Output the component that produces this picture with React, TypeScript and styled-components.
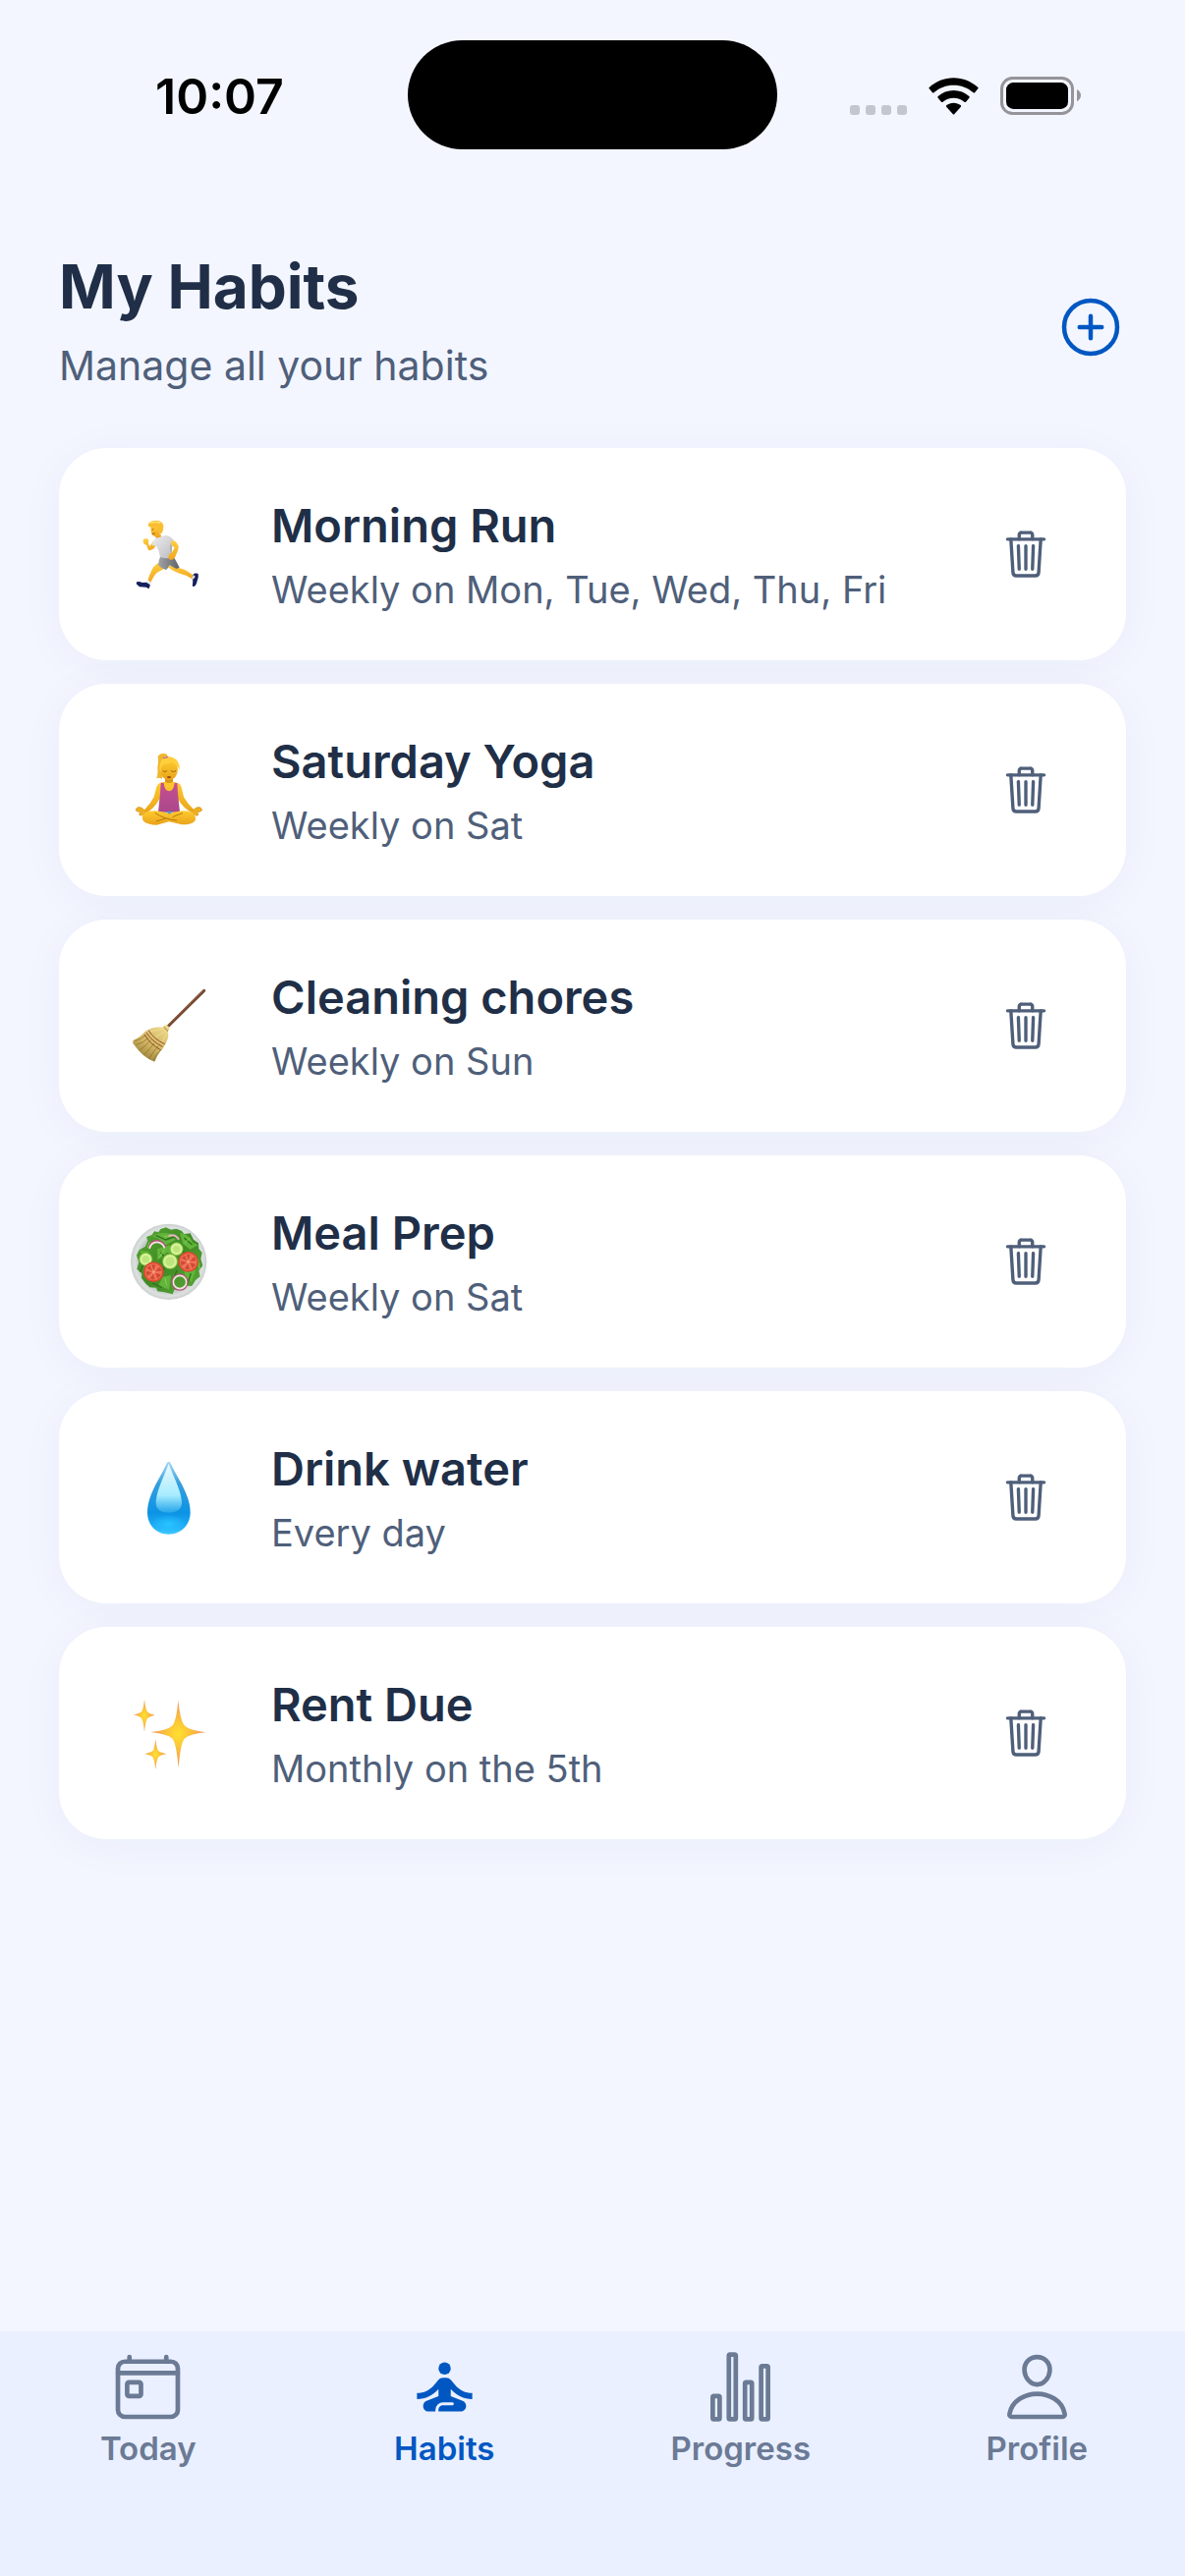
import React from "react";
import styled, { createGlobalStyle } from "styled-components";

const color = {
  page: "#f3f6ff",
  card: "#ffffff",
  bar: "#eaf0ff",
  ink: "#202f47",
  muted: "#4f5f7a",
  idle: "#6b7a95",
  accent: "#0057c2",
};

const GlobalStyle = createGlobalStyle`
  *, *::before, *::after { box-sizing: border-box; }
  body {
    margin: 0;
    background: ${color.page};
    color: ${color.ink};
    font-family: Inter, "Liberation Sans", sans-serif;
  }
  h1, h2, p, ul { margin: 0; padding: 0; }
  button { font: inherit; border: 0; padding: 0; background: none; cursor: pointer; }
`;

const Screen = styled.div`
  display: flex;
  flex-direction: column;
  min-height: 100vh;
`;

const StatusBar = styled.div`
  display: grid;
  grid-template-columns: 1fr 376px 1fr;
  align-items: center;
  justify-items: center;
  padding: 41px 32px 28px;
`;

const Clock = styled.time`
  padding-top: 2px;
  font-size: 50px;
  line-height: 60px;
  font-weight: 600;
  color: #000;
`;

const Island = styled.div`
  width: 100%;
  height: 111px;
  border-radius: 56px;
  background: #000;
`;

const StatusIcons = styled.div`
  display: flex;
  align-items: center;
  gap: 22px;
  padding-top: 2px;
  svg { display: block; }
`;

const Header = styled.header`
  display: flex;
  align-items: center;
  justify-content: space-between;
  padding: 72px 60px 42px;
`;

const Heading = styled.div`
  display: flex;
  flex-direction: column;
  gap: 12px;
  padding-bottom: 14px;
`;

const Title = styled.h1`
  font-size: 62px;
  line-height: 80px;
  font-weight: 700;
`;

const Subtitle = styled.p`
  font-size: 41px;
  line-height: 56px;
  color: ${color.muted};
`;

const AddButton = styled.button`
  display: flex;
  color: ${color.accent};
`;

const Main = styled.main`
  flex: 1;
  padding: 0 60px 60px;
`;

const HabitList = styled.ul`
  display: flex;
  flex-direction: column;
  gap: 24px;
  list-style: none;
`;

const HabitCard = styled.li`
  display: flex;
  align-items: center;
  padding: 48px;
  border-radius: 48px;
  background: ${color.card};
  box-shadow: 0 6px 48px rgba(32, 47, 90, 0.04);
`;

const Emoji = styled.div`
  display: flex;
  justify-content: center;
  width: 126px;
  margin-right: 42px;
`;

const HabitText = styled.div`
  display: flex;
  flex: 1;
  flex-direction: column;
  gap: 10px;
  min-width: 0;
`;

const HabitName = styled.h2`
  font-size: 47px;
  line-height: 62px;
  font-weight: 600;
`;

const HabitSchedule = styled.p`
  font-size: 38px;
  line-height: 48px;
  color: ${color.muted};
`;

const DeleteButton = styled.button`
  display: flex;
  align-items: center;
  justify-content: center;
  width: 108px;
  height: 108px;
  color: ${color.muted};
`;

const TabBar = styled.nav`
  display: flex;
  padding: 19px 0 110px;
  background: ${color.bar};
`;

const Tab = styled.a<{ $active?: boolean }>`
  display: flex;
  flex: 1;
  flex-direction: column;
  align-items: center;
  gap: 5px;
  color: ${(p) => (p.$active ? color.accent : color.idle)};
  font-size: 33px;
  line-height: 40px;
  font-weight: 600;
  text-decoration: none;
`;

const LineIcon = ({ size, children }: { size: number; children: React.ReactNode }) => (
  <svg
    width={size}
    height={size}
    viewBox="0 0 512 512"
    fill="none"
    stroke="currentColor"
    strokeWidth="32"
    strokeLinecap="round"
    strokeLinejoin="round"
    aria-hidden="true"
  >
    {children}
  </svg>
);

const AddIcon = () => (
  <LineIcon size={72}>
    <circle cx="256" cy="256" r="192" />
    <path d="M256 176v160M336 256H176" />
  </LineIcon>
);

const TrashIcon = () => (
  <LineIcon size={54}>
    <path d="M112 112l20 320c.95 18.49 14.4 32 32 32h184c17.67 0 30.87-13.51 32-32l20-320" />
    <path d="M80 112h352" />
    <path d="M192 112V72a23.93 23.93 0 0124-24h80a23.93 23.93 0 0124 24v40" />
    <path d="M256 176v224M184 176l8 224M328 176l-8 224" />
  </LineIcon>
);

const TodayIcon = () => (
  <LineIcon size={75}>
    <rect x="48" y="80" width="416" height="384" rx="48" />
    <rect x="112" y="224" width="96" height="96" rx="13" />
    <path d="M128 48v32M384 48v32M464 160H48" />
  </LineIcon>
);

const HabitsIcon = () => (
  <svg width="75" height="75" viewBox="0 0 24 24" fill="currentColor" aria-hidden="true">
    <circle cx="12" cy="6" r="2" />
    <path d="M21 16v-2c-2.24 0-4.16-.96-5.6-2.68l-1.34-1.6A1.98 1.98 0 0012.53 9h-1.05c-.59 0-1.15.26-1.53.72l-1.34 1.6C7.16 13.04 5.24 14 3 14v2c2.77 0 5.19-1.17 7-3.25V15l-3.88 1.55c-.67.27-1.12.93-1.12 1.66C5 19.2 5.8 20 6.79 20H9v-.5a2.5 2.5 0 012.5-2.5h3c.28 0 .5.22.5.5s-.22.5-.5.5h-3c-.83 0-1.5.67-1.5 1.5v.5h7.1c.99 0 1.9-.8 1.9-1.79 0-.73-.45-1.39-1.12-1.66L14 15v-2.25c1.81 2.08 4.23 3.25 7 3.25z" />
  </svg>
);

const ProgressIcon = () => (
  <LineIcon size={75}>
    <rect x="64" y="320" width="48" height="160" rx="8" />
    <rect x="288" y="224" width="48" height="256" rx="8" />
    <rect x="400" y="112" width="48" height="368" rx="8" />
    <rect x="176" y="32" width="48" height="448" rx="8" />
  </LineIcon>
);

const ProfileIcon = () => (
  <LineIcon size={75}>
    <path d="M344 144c-3.92 52.87-44 96-88 96s-84.15-43.12-88-96c-4-55 35-96 88-96s92 42 88 96z" />
    <path d="M256 304c-87 0-175.3 48-191.64 138.6C62.39 453.52 68.57 464 80 464h352c11.44 0 17.62-10.48 15.65-21.4C431.3 352 343 304 256 304z" />
  </LineIcon>
);

const SignalIcon = () => (
  <svg width="58" height="38" viewBox="0 0 58 38" fill="#c3c6cf" aria-hidden="true">
    {[0, 16, 32, 48].map((x) => (
      <rect key={x} x={x} y="28" width="10" height="10" rx="3" />
    ))}
  </svg>
);

const WifiIcon = () => (
  <svg width="51" height="38" viewBox="0 0 153 114" aria-hidden="true">
    <path d="M76.500 1C105 1 131 12 151 30Q153 32 151 34L141 46Q139 48 137 46C120 31 99 23 76.500 23S33 31 16 46Q14 48 12 46L2 34Q0 32 2 30C22 12 48 1 76.500 1Z" />
    <path d="M76.500 39C95 39 111 46 124 57Q127 60 124 62L114 74Q112 76 109 74C100 66 89 62 76.500 62S53 66 44 74Q41 76 39 74L29 62Q26 60 29 57C42 46 58 39 76.500 39Z" />
    <path d="M76.500 77C85 77 92 80 98 84Q101 87 98 90L79 111Q76.500 114 74 111L55 90Q52 87 55 84C61 80 68 77 76.500 77Z" />
  </svg>
);

const BatteryIcon = () => (
  <svg width="82" height="39" viewBox="0 0 246 117" aria-hidden="true">
    <rect x="4.500" y="4.500" width="216" height="108" rx="33" fill="none" stroke="#949499" strokeWidth="9" />
    <rect x="18" y="18" width="189" height="81" rx="22" />
    <path d="M234 39C242 44 246 50 246 57S242 71 234 76Z" fill="#949499" />
  </svg>
);

const RunnerArt = () => (
  <svg width="84" height="84" viewBox="87 66 252 252" role="img" aria-label="Runner">
    <defs>
      <linearGradient id="run-skin" x1="0" y1="0" x2="0" y2="1">
        <stop offset="0" stopColor="#ffcf3f" />
        <stop offset="1" stopColor="#f0a51e" />
      </linearGradient>
      <linearGradient id="run-shirt" x1="0" y1="0" x2="1" y2="1">
        <stop offset="0" stopColor="#ededf0" />
        <stop offset="1" stopColor="#bcbcc0" />
      </linearGradient>
      <linearGradient id="run-shorts" x1="0" y1="0" x2="1" y2="0">
        <stop offset="0" stopColor="#a2a4a7" />
        <stop offset="1" stopColor="#5f6266" />
      </linearGradient>
    </defs>
    <path d="M226 223L252 236Q268 238 292 259L287 268Q268 254 249 251Q229 246 213 232Z" fill="url(#run-skin)" />
    <path d="M290 254Q293 249 304 251Q308 257 302 274Q300 288 292 291Q286 291 288 284Q291 273 287 268Z" fill="#17205c" />
    <path d="M286 263L292 256L296 261L289 270Z" fill="#e9eaf4" />
    <path d="M188 216Q167 227 160 249Q154 260 151 275L159 281Q168 259 180 248Q196 242 206 232Z" fill="url(#run-skin)" />
    <path d="M118 277Q126 275 134 279L149 278L158 284Q159 292 154 298L146 293L126 292Q116 287 116 280Z" fill="#17205c" />
    <path d="M148 275L153 272L162 278L158 284Q152 283 148 279Z" fill="#e9eaf4" />
    <path d="M190 199L232 203Q240 217 248 233L238 237L218 226Q210 240 206 240Q193 237 183 226Q184 210 190 199Z" fill="url(#run-shorts)" />
    <path d="M174 139L189 132L199 145L184 155Z" fill="#eaa11e" />
    <path d="M167 153L178 163Q170 179 157 181Q151 180 148 165L140 161L136 151Q139 143 149 145Q156 147 153 160L157 168Q163 162 167 153Z" fill="url(#run-skin)" />
    <path d="M166 156Q169 145 185 141L203 135Q220 134 230 149L233 160L225 170Q225 191 222 204Q205 207 189 201Q187 184 178 168L165 165Z" fill="url(#run-shirt)" />
    <path d="M220 158Q217 175 222 194Q226 181 225 169Z" fill="#aaaeb3" />
    <path d="M226 151Q236 150 245 167Q246 178 237 195Q234 208 221 210Q212 207 215 195Q218 188 224 189L233 172L224 166Q220 157 226 151Z" fill="url(#run-skin)" />
    <path d="M160 103Q159 120 163 131Q171 142 184 136Q194 126 193 111Q183 98 160 103Z" fill="url(#run-skin)" />
    <path d="M153 102Q154 91 174 89Q195 89 199 104Q200 120 192 130Q187 132 184 126Q187 121 182 119L181 108Q168 112 153 108Z" fill="#f9bd32" />
    <path d="M164 117L169 116M165 130L173 129" stroke="#9a5a12" strokeWidth="3" fill="none" />
    <path d="M158 97Q174 91 190 97" stroke="#ffdf70" strokeWidth="5" fill="none" />
  </svg>
);

const YogaArt = () => (
  <svg width="84" height="84" viewBox="87 786 252 252" role="img" aria-label="Person in lotus position">
    <defs>
      <linearGradient id="yoga-skin" x1="0" y1="0" x2="0" y2="1">
        <stop offset="0" stopColor="#ffcb2e" />
        <stop offset="1" stopColor="#e9a31b" />
      </linearGradient>
      <linearGradient id="yoga-top" x1="0" y1="0" x2="0" y2="1">
        <stop offset="0" stopColor="#c64f91" />
        <stop offset="1" stopColor="#a9488b" />
      </linearGradient>
    </defs>
    <path d="M181 842Q185 822 182 812Q184 802 199 801Q210 800 212 809Q203 808 198 815L204 845L194 879Q187 872 178 877Q183 864 181 842Z" fill="#efb62b" />
    <path d="M204 878H228V895H204Z" fill="#d99516" />
    <path d="M194 889L204 887Q216 895 228 887L240 890Q253 893 255 909L261 934Q273 955 289 969L296 976L290 985L274 974Q249 956 239 929L235 978H195L192 929Q181 956 157 976L142 986L136 977L145 968Q160 953 170 934L177 907Q180 893 194 889Z" fill="url(#yoga-skin)" />
    <path d="M191 891L200 890Q201 913 216 916Q231 915 233 890L241 891L243 922L249 980H183L189 922Z" fill="url(#yoga-top)" />
    <path d="M142 976Q134 963 121 965Q111 972 116 976L129 981Q121 989 129 990L143 986M289 976Q297 963 310 965Q321 972 315 976L302 982Q310 988 302 991L288 985" fill="#eeb020" stroke="#cb8d18" strokeWidth="2" />
    <path d="M140 983Q161 973 186 977L216 983L246 977Q270 973 290 983Q301 994 295 1007Q286 1018 255 1018L216 1009L179 1019Q149 1018 138 1007Q130 994 140 983Z" fill="url(#yoga-skin)" />
    <path d="M206 979Q217 975 228 979L217 986Z" fill="#5b96c8" />
    <path d="M173 982Q201 1002 240 1005M258 983Q238 989 227 995M206 999L177 1008" fill="none" stroke="#b3780f" strokeWidth="3" />
    <ellipse cx="216" cy="850" rx="27" ry="32" fill="url(#yoga-skin)" />
    <path d="M187 850Q186 823 201 813Q218 804 238 819Q250 833 248 851Q241 834 224 827Q214 833 199 835Q190 840 191 861Z" fill="#ffce3c" />
    <path d="M197 854Q203 859 210 854M222 854Q229 859 237 854" fill="none" stroke="#9b650e" strokeWidth="3" />
    <path d="M209 872Q216 868 223 872Q216 882 209 872Z" fill="#9a4b15" />
    <path d="M198 815L213 811" stroke="#c5658f" strokeWidth="4" />
  </svg>
);

const BroomArt = () => (
  <svg width="84" height="84" viewBox="87 96 252 252" role="img" aria-label="Broom">
    <defs>
      <linearGradient id="broom-head" x1="0.800" y1="0" x2="0.200" y2="1">
        <stop offset="0" stopColor="#edd78a" />
        <stop offset="0.550" stopColor="#cfb461" />
        <stop offset="1" stopColor="#8f722f" />
      </linearGradient>
    </defs>
    <path d="M212 225L323 115" stroke="#74462f" strokeWidth="9" strokeLinecap="round" />
    <path d="M213 221L322 113" stroke="#9a6a4a" strokeWidth="2" />
    <path d="M198 227Q201 218 210 220L217 227Q219 236 213 239L214 254Q208 280 190 300Q180 313 172 332Q138 322 106 276L106 267Q128 258 142 241Q162 224 198 227Z" fill="url(#broom-head)" />
    <path d="M112 269Q128 265 145 251M116 280Q137 275 153 260M128 296Q146 282 160 267M141 310Q158 292 171 276M155 323Q168 301 183 284M168 330Q174 311 193 294" stroke="#86692b" strokeWidth="2" fill="none" />
    <path d="M202 232Q180 232 158 240M208 237Q189 248 175 256M211 242L193 275" stroke="#f4e3a0" strokeWidth="2" fill="none" />
    <path d="M154 237Q170 263 203 278M147 243Q164 270 196 286M141 249Q158 278 190 296" stroke="#93512a" strokeWidth="3" fill="none" />
    <path d="M200 226L213 239" stroke="#9c7a32" strokeWidth="3" />
  </svg>
);

const Tomato = ({ x, y }: { x: number; y: number }) => (
  <g transform={`translate(${x} ${y})`}>
    <circle r="31" fill="#dc4a33" />
    <circle r="26" fill="#ef7355" />
    <path d="M0 -5L-6 -21Q0 -25 6 -21ZM5 -2L17 -15Q24 -9 23 -3ZM5 3L22 7Q19 16 12 20ZM-1 6L4 22Q-5 25 -11 20ZM-5 2L-20 12Q-25 4 -22 -3ZM-4 -3L-20 -10Q-17 -18 -11 -20Z" fill="#cf4a34" />
    <circle r="4" fill="#f7a183" />
  </g>
);

const Cucumber = ({ x, y, r }: { x: number; y: number; r: number }) => (
  <g>
    <circle cx={x} cy={y} r={r} fill="#79b93a" />
    <circle cx={x} cy={y} r={r - 3} fill="#d7f29a" />
    <circle cx={x} cy={y} r={r - 10} fill="#bde57c" />
  </g>
);

const SaladArt = () => (
  <svg width="84" height="84" viewBox="87 816 252 252" role="img" aria-label="Green salad">
    <defs>
      <radialGradient id="salad-bowl">
        <stop offset="0.700" stopColor="#aeb8b2" />
        <stop offset="0.900" stopColor="#dde2e1" />
        <stop offset="1" stopColor="#c9cfcd" />
      </radialGradient>
      <linearGradient id="salad-leaf" x1="0" y1="0" x2="1" y2="1">
        <stop offset="0" stopColor="#56a632" />
        <stop offset="0.500" stopColor="#3f8a25" />
        <stop offset="1" stopColor="#5dab39" />
      </linearGradient>
    </defs>
    <circle cx="215" cy="943" r="116" fill="url(#salad-bowl)" />
    <path d="M190 843L207 838L222 845L238 842L254 848L262 858L281 856L291 875L306 886L307 903L317 915L313 934L319 955L307 970L311 988L297 999L286 1017L263 1016L248 1026L232 1028L227 1042L202 1036L181 1033L177 1022L157 1021L143 1007L132 992L133 979L118 965L124 944L117 923L125 907L144 896L151 878L147 867L164 861L171 850L184 853Z" fill="url(#salad-leaf)" />
    <path d="M165 864Q187 851 220 857L236 876L206 892L182 871ZM249 854Q280 859 289 885L305 892L280 905L258 888ZM180 904L218 892L240 926L210 914L181 939ZM262 968L298 969L285 1004L266 998ZM197 989L222 984L216 1028L184 1015ZM125 909L157 912L141 925Z" fill="#62b53a" />
    <path d="M176 862L206 876L240 864M262 870L287 891M190 914L210 936L199 969M240 969L225 1010M283 978L273 1009M136 954L128 974M165 1008L194 1021M251 903L265 918" fill="none" stroke="#2f701f" strokeWidth="4" />
    <path d="M201 867L223 862M263 887L280 870M203 905L186 930M209 1015L203 991M304 935L309 965M157 883L151 900" fill="none" stroke="#8acf52" strokeWidth="3" />
    <path d="M155 900Q160 878 180 879Q201 881 205 899" fill="none" stroke="#b45277" strokeWidth="6" />
    <path d="M156 903Q162 882 180 883Q196 884 203 901" fill="none" stroke="#f4e4e3" strokeWidth="5" />
    <path d="M215 864Q235 857 246 875" fill="none" stroke="#eeb2c4" strokeWidth="6" />
    <Cucumber x={239} y={904} r={21} />
    <Cucumber x={145} y={935} r={21} />
    <Cucumber x={219} y={942} r={24} />
    <Tomato x={275} y={943} />
    <Tomato x={169} y={974} />
    <circle cx="249" cy="1005" r="24" fill="none" stroke="#b45277" strokeWidth="4" />
    <circle cx="249" cy="1005" r="20" fill="none" stroke="#f2e5e1" strokeWidth="5" />
  </svg>
);

const DropletArt = () => (
  <svg width="84" height="84" viewBox="87 96 252 252" role="img" aria-label="Droplet">
    <defs>
      <linearGradient id="drop-body" x1="0" y1="0" x2="0" y2="1">
        <stop offset="0" stopColor="#a9d9f4" />
        <stop offset="0.300" stopColor="#369fdd" />
        <stop offset="0.700" stopColor="#0c93e4" />
        <stop offset="0.900" stopColor="#1eaef7" />
        <stop offset="1" stopColor="#45c9ff" />
      </linearGradient>
      <radialGradient id="drop-glow" cx="0.500" cy="0.500" r="0.500">
        <stop offset="0" stopColor="#28c3ff" />
        <stop offset="1" stopColor="#28c3ff" stopOpacity="0" />
      </radialGradient>
      <linearGradient id="drop-shine" x1="0" y1="0" x2="0" y2="1">
        <stop offset="0" stopColor="#eefaff" />
        <stop offset="0.650" stopColor="#a6ecff" />
        <stop offset="1" stopColor="#7addff" stopOpacity="0.250" />
      </linearGradient>
    </defs>
    <path d="M215 113Q219 113 222 120C238 158 281 212 281 268C281 307 253 335 215 335S150 307 150 268C150 212 193 158 208 120Q211 113 215 113Z" fill="url(#drop-body)" />
    <ellipse cx="215" cy="304" rx="54" ry="29" fill="url(#drop-glow)" />
    <path d="M215 119C228 157 254 201 255 239C255 259 238 269 215 269S176 259 176 239C177 201 202 157 215 119Z" fill="url(#drop-shine)" />
  </svg>
);

const SparklesArt = () => (
  <svg width="84" height="84" viewBox="87 816 252 252" role="img" aria-label="Sparkles">
    <defs>
      <radialGradient id="spark">
        <stop offset="0" stopColor="#ffe02f" />
        <stop offset="0.350" stopColor="#fcc837" />
        <stop offset="1" stopColor="#f3935a" />
      </radialGradient>
    </defs>
    <g fill="url(#spark)">
      <path d="M244 842C248 875 252 903 263 919Q278 934 328 940Q278 945 263 959C252 974 249 1009 245 1048C241 1009 237 974 227 959Q212 945 160 939Q212 934 227 919C237 903 241 875 244 842Z" />
      <path d="M141 839Q144 868 150 877Q156 884 173 887Q157 891 150 897Q144 906 141 939Q138 906 132 897Q125 890 108 886Q125 883 132 877Q138 868 141 839Z" />
      <path d="M175 961Q178 989 184 997Q190 1002 209 1006Q191 1009 184 1015Q178 1024 175 1054Q172 1024 166 1015Q159 1009 141 1006Q159 1002 166 997Q172 989 175 961Z" />
    </g>
  </svg>
);

const habits = [
  { name: "Morning Run", schedule: "Weekly on Mon, Tue, Wed, Thu, Fri", Art: RunnerArt },
  { name: "Saturday Yoga", schedule: "Weekly on Sat", Art: YogaArt },
  { name: "Cleaning chores", schedule: "Weekly on Sun", Art: BroomArt },
  { name: "Meal Prep", schedule: "Weekly on Sat", Art: SaladArt },
  { name: "Drink water", schedule: "Every day", Art: DropletArt },
  { name: "Rent Due", schedule: "Monthly on the 5th", Art: SparklesArt },
];

const tabs = [
  { label: "Today", Icon: TodayIcon },
  { label: "Habits", Icon: HabitsIcon, active: true },
  { label: "Progress", Icon: ProgressIcon },
  { label: "Profile", Icon: ProfileIcon },
];

export default function App() {
  return (
    <Screen>
      <GlobalStyle />
      <StatusBar>
        <Clock>10:07</Clock>
        <Island />
        <StatusIcons>
          <SignalIcon />
          <WifiIcon />
          <BatteryIcon />
        </StatusIcons>
      </StatusBar>
      <Header>
        <Heading>
          <Title>My Habits</Title>
          <Subtitle>Manage all your habits</Subtitle>
        </Heading>
        <AddButton type="button" aria-label="Add habit">
          <AddIcon />
        </AddButton>
      </Header>
      <Main>
        <HabitList>
          {habits.map(({ name, schedule, Art }) => (
            <HabitCard key={name}>
              <Emoji>
                <Art />
              </Emoji>
              <HabitText>
                <HabitName>{name}</HabitName>
                <HabitSchedule>{schedule}</HabitSchedule>
              </HabitText>
              <DeleteButton type="button" aria-label={`Delete ${name}`}>
                <TrashIcon />
              </DeleteButton>
            </HabitCard>
          ))}
        </HabitList>
      </Main>
      <TabBar aria-label="Main">
        {tabs.map(({ label, Icon, active }) => (
          <Tab key={label} href={`#${label.toLowerCase()}`} $active={active} aria-current={active ? "page" : undefined}>
            <Icon />
            {label}
          </Tab>
        ))}
      </TabBar>
    </Screen>
  );
}
